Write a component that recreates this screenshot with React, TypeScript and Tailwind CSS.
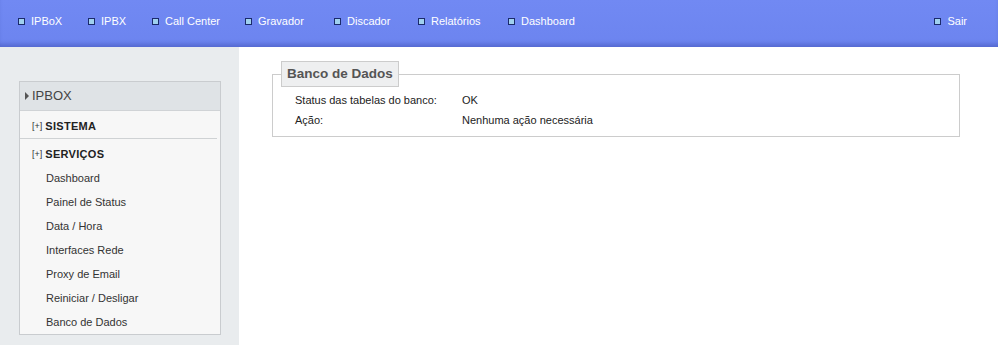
import React from 'react';

const NAV = [
  { label: 'IPBoX', w: 'w-[70px]' },
  { label: 'IPBX', w: 'w-[64px]' },
  { label: 'Call Center', w: 'w-[93px]' },
  { label: 'Gravador', w: 'w-[89px]' },
  { label: 'Discador', w: 'w-[84px]' },
  { label: 'Relatórios', w: 'w-[90px]' },
  { label: 'Dashboard', w: 'w-[90px]' },
];

const SERVICOS = [
  'Dashboard',
  'Painel de Status',
  'Data / Hora',
  'Interfaces Rede',
  'Proxy de Email',
  'Reiniciar / Desligar',
  'Banco de Dados',
];

const Bullet = () => (
  <span className="inline-block w-[7px] h-[7px] border border-[#1b2a6b] bg-[#9fd0ee] mr-[6px] shrink-0" />
);

const NavItem = ({ label, w }: { label: string; w?: string }) => (
  <a className={`flex items-center text-white text-[11px] cursor-pointer ${w ?? ''}`}>
    <Bullet />
    <span>{label}</span>
  </a>
);

const App: React.FC = () => {
  return (
    <div className="w-[998px] h-[345px] flex flex-col bg-white font-['Liberation_Sans',Arial,sans-serif] overflow-hidden">
      {/* Top bar */}
      <header className="h-[47px] shrink-0 flex items-center pl-[18px] pr-[31px] pb-[4px] bg-gradient-to-b from-[#7189f3] to-[#6c84ef] shadow-[inset_0_-5px_4px_-2px_rgba(40,55,150,0.35)]">
        {NAV.map(n => (
          <NavItem key={n.label} label={n.label} w={n.w} />
        ))}
        <div className="flex-1" />
        <NavItem label="Sair" />
      </header>

      <div className="flex flex-1 min-h-0">
        {/* Sidebar */}
        <aside className="w-[239px] shrink-0 bg-[#e9ecee] pt-[34px] pl-[19px] pr-[18px]">
          <div className="border border-[#c9cccf] bg-[#f7f7f7] text-[#333]">
            <div className="h-[29px] flex items-center pl-[5px] bg-[#dfe3e6] border-b border-[#d0d3d6] text-[13px] text-[#444]">
              <span className="w-0 h-0 border-y-[4px] border-y-transparent border-l-[4px] border-l-[#555] mr-[3px]" />
              IPBOX
            </div>
            <div className="h-[28px] flex items-center pt-[4px] pl-[12px] border-b border-[#cfd2d4] mr-[3px]">
              <span className="text-[9px] text-[#333] mr-[3px]">[+]</span>
              <span className="text-[11px] font-bold tracking-[0.3px] text-[#222]">SISTEMA</span>
            </div>
            <div className="h-[27px] flex items-center pt-[4px] pl-[12px]">
              <span className="text-[9px] text-[#333] mr-[3px]">[+]</span>
              <span className="text-[11px] font-bold tracking-[0.3px] text-[#222]">SERVIÇOS</span>
            </div>
            {SERVICOS.map(s => (
              <div key={s} className="h-[24px] flex items-center pl-[26px] text-[11px] text-[#333]">
                {s}
              </div>
            ))}
          </div>
        </aside>

        {/* Main */}
        <main className="flex-1 pl-[33px] pr-[38px] pt-[14px]">
          <fieldset className="border border-[#cccccc] pl-[8px] pb-[6px]">
            <legend className="h-[26px] px-[5px] flex items-center border border-[#cccccc] bg-[#eeeff0] text-[13.5px] font-bold text-[#555]">
              Banco de Dados
            </legend>
            <div className="ml-[14px] mt-[3px] text-[11px] text-[#222]">
              <div className="h-[20px] flex items-center">
                <span className="w-[167px]">Status das tabelas do banco:</span>
                <span>OK</span>
              </div>
              <div className="h-[20px] flex items-center">
                <span className="w-[167px]">Ação:</span>
                <span>Nenhuma ação necessária</span>
              </div>
            </div>
          </fieldset>
        </main>
      </div>
    </div>
  );
};

export default App;
